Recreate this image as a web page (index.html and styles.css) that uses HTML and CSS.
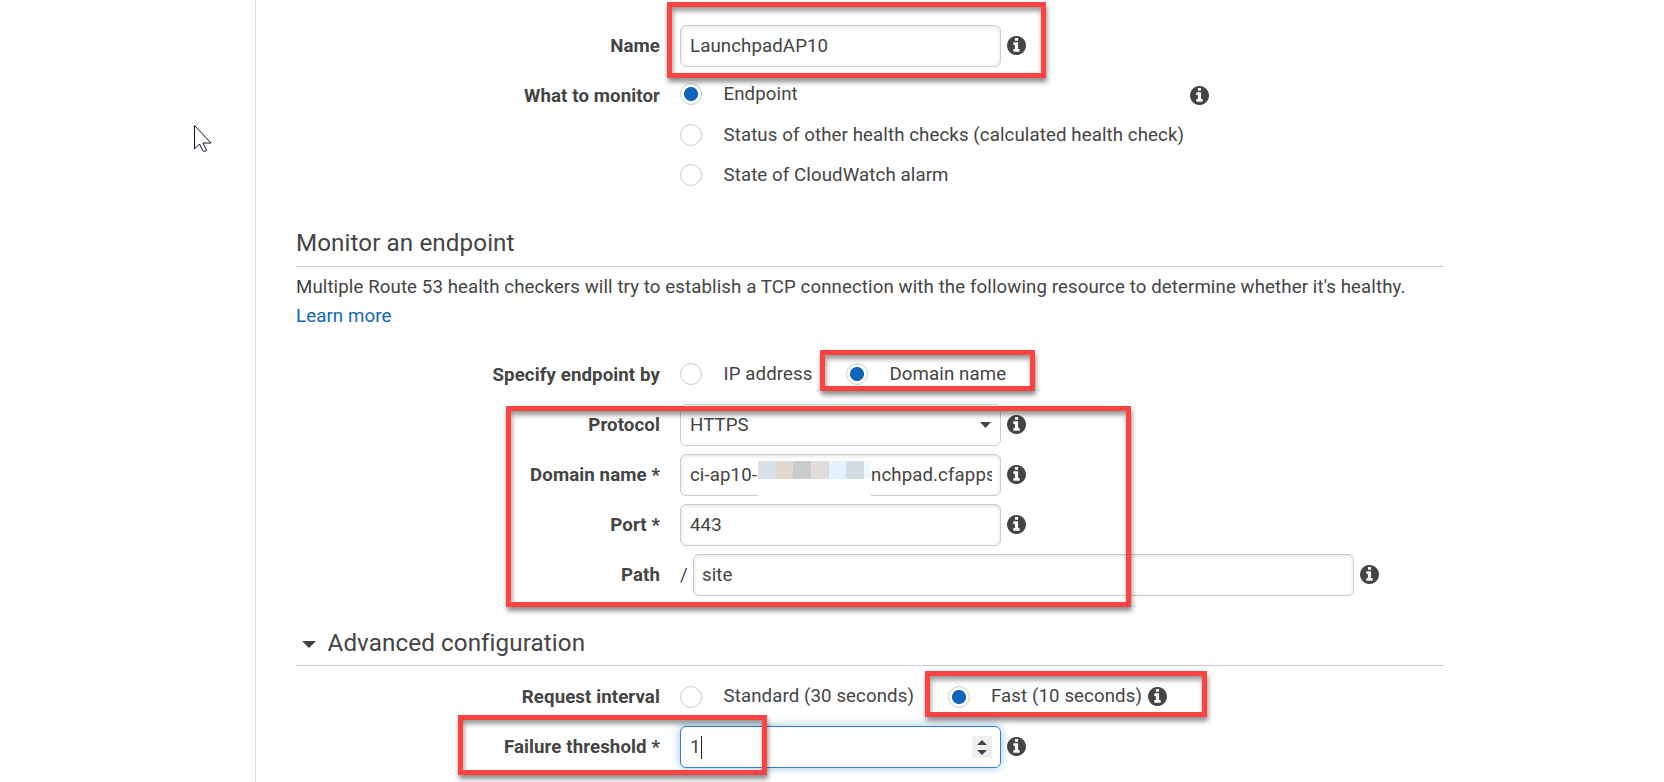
FILE: index.html
```html
<!DOCTYPE html>
<html lang="en">
<head>
<meta charset="utf-8">
<title>Configure health check</title>
<link rel="stylesheet" href="styles.css">
</head>
<body>
<svg width="0" height="0" class="defs"><symbol id="info" viewBox="0 128 1536 1536"><path d="M1024 1376v-160q0-14-9-23t-23-9h-96v-512q0-14-9-23t-23-9h-320q-14 0-23 9t-9 23v160q0 14 9 23t23 9h96v320h-96q-14 0-23 9t-9 23v160q0 14 9 23t23 9h448q14 0 23-9t9-23zm-128-896v-160q0-14-9-23t-23-9h-192q-14 0-23 9t-9 23v160q0 14 9 23t23 9h192q14 0 23-9t9-23zm640 416q0 209-103 385.5t-279.5 279.5-385.5 103-385.5-103-279.5-279.5-103-385.5 103-385.5 279.5-279.5 385.5-103 385.5 103 279.5 279.5 103 385.5z"/></symbol></svg>
<div class="page">
  <aside class="side"></aside>
  <main class="main">
    <div class="row row-name">
      <span class="label">Name</span>
      <div class="field">LaunchpadAP10</div>
      <svg class="info"><use href="#info"/></svg>
    </div>
    <div class="row monitor">
      <span class="label">What to monitor</span>
      <div class="options">
        <div class="option"><i class="radio on"></i><span>Endpoint</span></div>
        <div class="option"><i class="radio"></i><span>Status of other health checks (calculated health check)</span></div>
        <div class="option"><i class="radio"></i><span>State of CloudWatch alarm</span></div>
      </div>
      <svg class="info"><use href="#info"/></svg>
    </div>
    <h2 class="heading first">Monitor an endpoint</h2>
    <p class="desc"><span class="sentence">Multiple Route 53 health checkers will try to establish a TCP connection with the following resource to determine whether it's healthy.</span><br><a class="link">Learn more</a></p>
    <div class="row specify">
      <span class="label">Specify endpoint by</span>
      <div class="option ip"><i class="radio"></i><span>IP address</span></div>
      <div class="option"><i class="radio on"></i><span>Domain name</span></div>
    </div>
    <div class="fields">
      <div class="row">
        <span class="label">Protocol</span>
        <div class="field select">HTTPS<svg class="caret" viewBox="0 0 11 6"><path d="M0 0h11L5.500 6z"/></svg></div>
        <svg class="info"><use href="#info"/></svg>
      </div>
      <div class="row">
        <span class="label">Domain name *</span>
        <div class="field domain"><span class="start">ci-ap10-</span><span class="mask"><b></b><b></b><b></b><b></b><b></b><b></b><b></b></span><span class="end">nchpad.cfapps</span></div>
        <svg class="info"><use href="#info"/></svg>
      </div>
      <div class="row">
        <span class="label">Port *</span>
        <div class="field">443</div>
        <svg class="info"><use href="#info"/></svg>
      </div>
      <div class="row">
        <span class="label">Path</span>
        <span class="slash">/</span><div class="field path">site</div>
        <svg class="info"><use href="#info"/></svg>
      </div>
    </div>
    <h2 class="heading second"><svg class="fold" viewBox="0 0 14 7"><path d="M0 0h14L7 7z"/></svg>Advanced configuration</h2>
    <div class="row request">
      <span class="label">Request interval</span>
      <div class="option standard"><i class="radio"></i><span>Standard (30 seconds)</span></div>
      <div class="option"><i class="radio on"></i><span>Fast (10 seconds)</span></div>
      <svg class="info"><use href="#info"/></svg>
    </div>
    <div class="row">
      <span class="label">Failure threshold *</span>
      <div class="field focus">1<i class="text-cursor"></i><svg class="spin" viewBox="0 0 20 22"><path d="M5 9h10l-5-5zM5 14h10l-5 5z"/></svg></div>
      <svg class="info"><use href="#info"/></svg>
    </div>
  </main>
  <div class="mark mark-name"></div>
  <div class="mark mark-domain"></div>
  <div class="mark mark-fields"></div>
  <div class="mark mark-fast"></div>
  <div class="mark mark-threshold"></div>
  <svg class="pointer" viewBox="0 0 20 29"><path d="M1.500 1.500v23.500l5-5 3.500 7q2 .8 3.500-.7l-3.500-7.300h8z"/></svg>
</div>
</body>
</html>
```
FILE: styles.css
```css
* { box-sizing: border-box; }
body { margin: 0; background: #fff; color: #444; font: 18.67px/29px Roboto, sans-serif; letter-spacing: .1px; }
.defs { position: absolute; }
.page { position: relative; display: flex; width: 1664px; height: 782px; overflow: hidden; }
.side { width: 256px; flex: none; border-right: 1px solid #ddd; }
.main { width: 1188px; padding-left: 40px; flex: none; }
.row { display: flex; align-items: center; height: 42px; }
.row-name { margin-top: 25px; }
.label { width: 364px; margin-right: 20px; flex: none; text-align: right; font-weight: 700; white-space: nowrap; }
.field { display: flex; align-items: center; width: 321px; height: 42px; flex: none; padding: 0 9px; border: 1px solid #ccc; border-radius: 6px; box-shadow: inset 0 1px 4px rgba(0,0,0,.12); white-space: nowrap; }
.info { width: 19px; height: 19px; margin: 0 0 2px 6px; flex: none; fill: #444; }
.row.monitor { height: 122px; margin-top: 7px; align-items: flex-start; }
.monitor .label { padding-top: 8px; }
.monitor .options { width: 504px; }
.monitor .info { margin-top: 12px; }
.option { display: flex; align-items: center; height: 40.5px; flex: none; white-space: nowrap; }
.monitor .option span { padding-top: 1px; }
.radio { display: block; width: 22px; height: 22px; flex: none; margin-right: 21.5px; border: 1px solid #ccc; border-radius: 50%; }
.radio.on { background: radial-gradient(circle, #1166bb 6.600px, #fff 7.400px); }
.heading { display: flex; align-items: center; margin: 0; border-bottom: 1px solid #ccc; font-size: 24.2px; line-height: 30px; font-weight: 400; }
.heading.first { height: 71px; padding-top: 23px; }
.desc { margin: 0; padding-top: 6px; height: 87px; }
.sentence { white-space: nowrap; }
.link { color: #1166bb; }
.specify .ip { width: 166px; }
.specify { margin-bottom: 8px; }
.specify .option { margin-bottom: 2px; }
.fields { display: grid; gap: 8px; }
.select { box-shadow: none; }
.caret { width: 11px; height: 6px; margin-left: auto; fill: #444; }
.start { width: 68px; flex: none; }
.mask { display: flex; align-self: flex-start; width: 113px; height: 36px; flex: none; margin-top: 6px; background: #fff; position: relative; z-index: 1; }
.mask b { width: 17.67px; height: 18px; background: #d9e1e8; }
.mask b:nth-child(2) { background: #e1d9cf; }
.mask b:nth-child(3) { background: #c9ccca; }
.mask b:nth-child(4) { background: #e2dbdc; }
.mask b:nth-child(5) { background: #e4f2fd; }
.mask b:nth-child(6) { background: #d4dde6; }
.mask b:nth-child(7) { width: 7px; background: #eefaff; }
.end { width: 121px; flex: none; overflow: hidden; }
.slash { width: 13px; flex: none; }
.path { width: 661px; padding: 0 8px; }
.heading.second { height: 70px; padding-top: 24px; }
.fold { width: 14px; height: 7px; margin: 3px 11.5px 0 6px; fill: #444; }
.request { margin-top: 10px; margin-bottom: 8px; }
.request .option, .request .info { margin-bottom: 1px; }
.request .standard { width: 267.5px; }
.focus { padding-right: 8px; border-color: #2a80d8; box-shadow: 0 0 10px rgba(60,140,225,.5); }
.text-cursor { width: 1px; height: 23px; background: #222; }
.spin { width: 20px; height: 22px; margin-left: auto; background: #efefef; fill: #444; }
.mark { position: absolute; border: 5px solid #ff4343; box-shadow: 1px 4px 5px rgba(0,0,0,.45), inset 1px 4px 5px rgba(0,0,0,.4); }
.mark-name { left: 667px; top: 2px; width: 379px; height: 76px; }
.mark-domain { left: 820px; top: 350px; width: 215px; height: 41px; }
.mark-fields { left: 506px; top: 406px; width: 625px; height: 201px; }
.mark-fast { left: 925px; top: 671px; width: 282px; height: 46px; }
.mark-threshold { left: 458px; top: 715px; width: 309px; height: 60px; }
.pointer { position: absolute; left: 193px; top: 124px; width: 20px; height: 29px; fill: #fff; stroke: #112; stroke-width: 1; }
```
